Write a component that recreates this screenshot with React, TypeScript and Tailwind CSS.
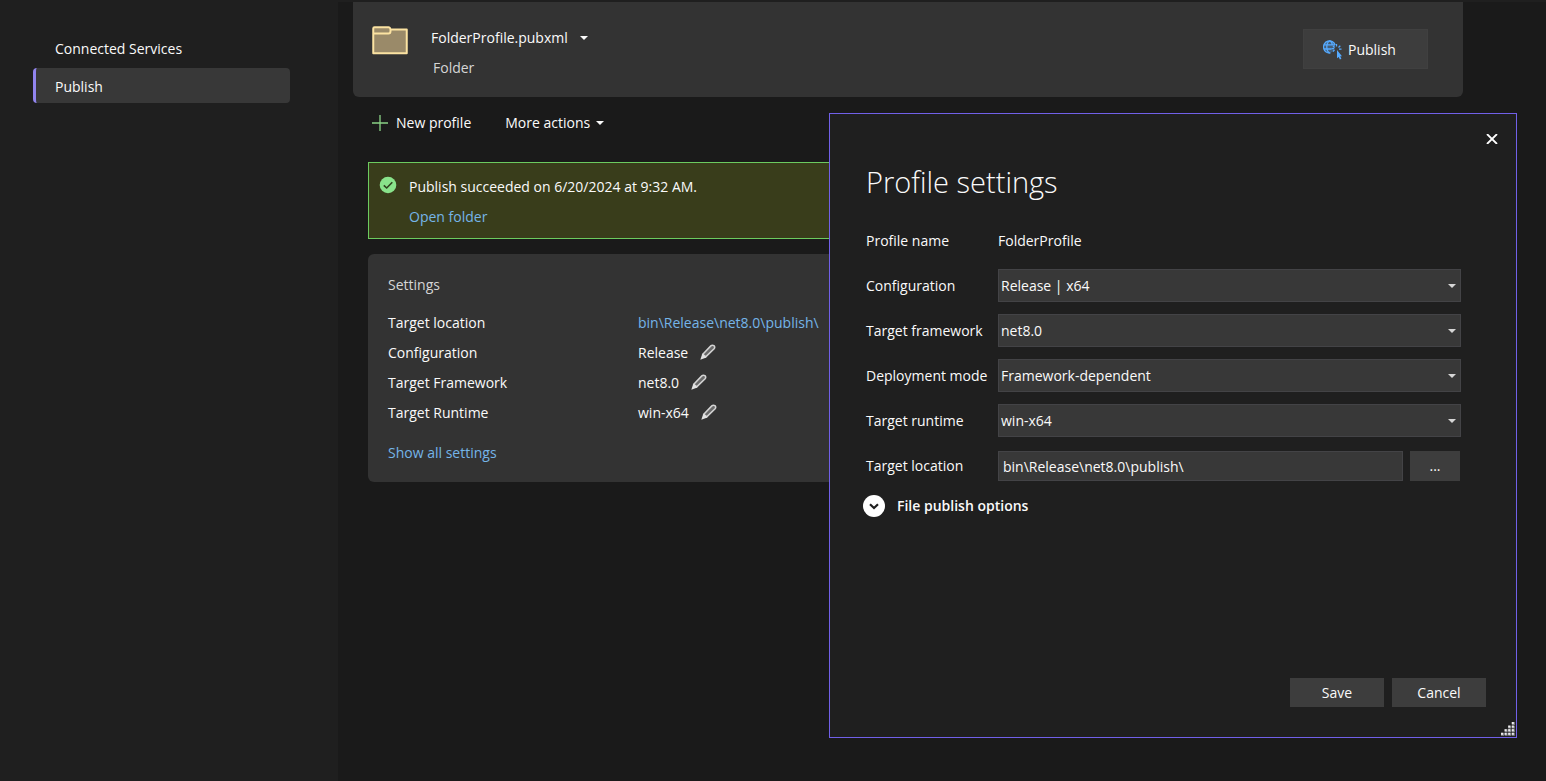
import { useId, type ReactNode } from "react";

function Caret({ className = "" }: { className?: string }) {
  return (
    <svg width="8" height="4" viewBox="0 0 8 4" aria-hidden="true" className={className}>
      <path d="M0 0h8L4 4z" fill="currentColor" />
    </svg>
  );
}

function FolderIcon() {
  return (
    <svg width="36" height="29" viewBox="0 0 36 29" aria-hidden="true" className="shrink-0">
      <path d="M1 2.500Q1 1 2.500 1H16.500L19 4h15.500v23.500H1z" fill="#9a8a69" />
      <path
        d="M1.250 2.500Q1.250 1.250 2.500 1.250H16.500Q18 1.250 18.500 3.500H34.750V27.250H1.250zM1.250 7.500H16.500Q18.500 7.500 18.500 5V3.500"
        fill="none"
        stroke="#fce3a2"
        strokeWidth="2"
        strokeLinejoin="round"
      />
    </svg>
  );
}

function GlobeCursorIcon() {
  return (
    <svg width="20" height="20" viewBox="0 0 20 20" aria-hidden="true" className="shrink-0">
      <circle cx="6.500" cy="7" r="5.800" fill="#55aaff" opacity="0.300" />
      <g fill="none" stroke="#55aaff" strokeWidth="1.300">
        <path d="M12.200 5A6 6 0 1 0 7.500 12.900" />
        <path d="M9.500 5.500Q8.700 1 6.500 1 3.800 2.500 3.800 7t2.700 6M1 4.800h11M.8 9h7.700" />
        <path d="M13.500 6.500V4M11.500 7.500 10 6M15.500 7.500 17.300 5.700M16 9.200h2.500M11.500 10 10 11.500M11 8.700H8.500" />
      </g>
      <path d="M14 10v8.300l1.700-1.400 1.200 2.600 1.500-.7-1.200-2.500H19z" fill="#55aaff" />
    </svg>
  );
}

function CheckIcon() {
  return (
    <svg width="18" height="18" viewBox="0 0 18 18" aria-hidden="true" className="shrink-0">
      <circle cx="9" cy="9" r="8.300" fill="#89e38b" />
      <path d="M4.800 9.300 7.700 12l5.600-5.800" fill="none" stroke="#30421f" strokeWidth="1.600" />
    </svg>
  );
}

function PencilIcon() {
  return (
    <svg width="16" height="16" viewBox="0 0 16 16" aria-hidden="true">
      <path
        d="M2.800 10.200 10.800 1.900Q12.200.6 13.900 1.600 15.400 3 14.100 4.700L5.700 12.900z"
        fill="#6a6a6a"
        stroke="#d4d4d4"
        strokeWidth="1.500"
      />
      <path d="M2.400 9.500.3 15.700 6.400 13.500z" fill="#e2e2e2" />
    </svg>
  );
}

function ResizeGrip() {
  const dots = [0, 1, 2, 3].flatMap((row) =>
    [0, 1, 2, 3].filter((col) => col >= 3 - row).map((col) => ({ row, col })),
  );
  return (
    <svg width="15" height="15" viewBox="0 0 15 15" aria-hidden="true" className="absolute right-px bottom-px">
      {dots.map(({ row, col }) => (
        <g key={`${row}-${col}`}>
          <rect x={col * 3.600 + 1} y={row * 3.600 + 1} width="3" height="3" fill="#85858a" />
          <rect x={col * 3.600 + 1} y={row * 3.600 + 1} width="2" height="2" fill="#ececec" />
        </g>
      ))}
    </svg>
  );
}

function SettingRow({ label, children }: { label: string; children: ReactNode }) {
  return (
    <div className="flex h-[30px] items-center">
      <dt className="w-[250px] shrink-0">{label}</dt>
      <dd className="flex items-center gap-3">{children}</dd>
    </div>
  );
}

function EditableSetting({ label, value }: { label: string; value: string }) {
  return (
    <SettingRow label={label}>
      {value}
      <button type="button" aria-label={`Edit ${label}`} className="pb-[2px]">
        <PencilIcon />
      </button>
    </SettingRow>
  );
}

function SelectField({ label, value }: { label: string; value: string }) {
  const id = useId();
  return (
    <div className="flex h-[33px] items-center">
      <label htmlFor={id} className="w-[132px] shrink-0">
        {label}
      </label>
      <div className="relative h-full flex-1">
        <select
          id={id}
          defaultValue={value}
          className="h-full w-full appearance-none border border-[#434346] bg-[#383838] pr-5 pl-[2px] text-[#fafafa] outline-none"
        >
          <option>{value}</option>
        </select>
        <Caret className="pointer-events-none absolute top-[15px] right-[5px] text-[#d6d6d6]" />
      </div>
    </div>
  );
}

function ProfileDialog() {
  const locationId = useId();
  return (
    <section
      role="dialog"
      aria-labelledby="dialog-title"
      className="absolute top-[113px] right-[29px] flex min-h-[625px] w-[688px] flex-col border border-[#7160e8] bg-[#1f1f1f] text-[#fafafa]"
    >
      <div className="flex justify-end px-4 pt-[17px]">
        <button type="button" aria-label="Close" className="flex h-4 w-4 items-center justify-center">
          <svg width="12" height="10" viewBox="0 0 12 10" aria-hidden="true">
            <path d="M1 0 11 10M11 0 1 10" stroke="#ffffff" strokeWidth="1.800" />
          </svg>
        </button>
      </div>
      <h2 id="dialog-title" className="mt-3 px-9 text-[29px] leading-[46px] font-light">
        Profile settings
      </h2>
      <form id="profile-form" className="mt-[19px] flex flex-col gap-3 pr-[55px] pl-9">
        <div className="flex h-[33px] items-center">
          <span className="w-[132px] shrink-0">Profile name</span>
          <span>FolderProfile</span>
        </div>
        <SelectField label="Configuration" value="Release | x64" />
        <SelectField label="Target framework" value="net8.0" />
        <SelectField label="Deployment mode" value="Framework-dependent" />
        <SelectField label="Target runtime" value="win-x64" />
        <div className="flex h-[33px] items-center">
          <label htmlFor={locationId} className="w-[132px] shrink-0">
            Target location
          </label>
          <div className="flex h-[30px] flex-1 gap-[7px] pr-px">
            <input
              id={locationId}
              type="text"
              defaultValue="bin\Release\net8.0\publish\"
              className="min-w-0 flex-1 border border-[#434346] bg-[#383838] px-1 pt-[2px] outline-none"
            />
            <button type="button" aria-label="Browse" className="w-[50px] bg-[#3d3d3d]">
              ...
            </button>
          </div>
        </div>
      </form>
      <button type="button" className="mt-[13px] flex items-center gap-3 self-start pl-[33px] font-semibold">
        <svg width="22" height="22" viewBox="0 0 22 22" aria-hidden="true">
          <circle cx="11" cy="11" r="11" fill="#ffffff" />
          <path d="m7 9.200 4 3.800 4-3.800" fill="none" stroke="#1f1f1f" strokeWidth="2.200" />
        </svg>
        File publish options
      </button>
      <div className="mt-auto flex justify-end gap-2 pr-[30px] pb-[30px]">
        <button type="submit" form="profile-form" className="h-[29px] w-[94px] bg-[#3d3d3d] pt-px">
          Save
        </button>
        <button type="button" className="h-[29px] w-[94px] bg-[#3d3d3d] pt-px">
          Cancel
        </button>
      </div>
      <ResizeGrip />
    </section>
  );
}

export default function App() {
  return (
    <div className="relative flex min-h-screen bg-[#1f1f1f] pt-[2px] font-['Open_Sans','Noto_Sans',sans-serif] text-[14px] leading-5 text-[#fafafa]">
      <nav className="w-[338px] shrink-0 pt-7 pr-12 pl-[33px]">
        <a href="#services" className="flex h-[35px] items-center pt-[2px] pl-[22px]">
          Connected Services
        </a>
        <a
          href="#publish"
          aria-current="page"
          className="mt-[3px] flex h-[35px] items-center rounded border-l-3 border-[#9184ee] bg-[#383838] pt-[2px] pl-[19px]"
        >
          Publish
        </a>
      </nav>

      <main className="min-w-0 flex-1 bg-[#1a1a1a] pr-[83px] pl-[15px]">
        <header className="flex h-[95px] items-start justify-between rounded-b-md bg-[#333333] pr-[35px] pl-[19px]">
          <div className="flex gap-[23px] pt-6">
            <FolderIcon />
            <div>
              <button type="button" className="flex h-6 items-center gap-3">
                FolderProfile.pubxml
                <Caret />
              </button>
              <p className="mt-2 pl-[2px] text-[#d6d6d6]">Folder</p>
            </div>
          </div>
          <button
            type="button"
            className="mt-[27px] flex h-10 w-[125px] items-center gap-[5px] border border-[#404040] bg-[#3d3d3d] pt-px pl-[19px]"
          >
            <GlobeCursorIcon />
            Publish
          </button>
        </header>

        <div className="flex h-[65px] items-start gap-[34px] pt-4 pl-[19px]">
          <button type="button" className="flex items-center gap-2">
            <svg width="16" height="16" viewBox="0 0 16 16" aria-hidden="true">
              <path d="M8 0v16M0 8h16" stroke="#89d185" strokeWidth="1.300" />
            </svg>
            New profile
          </button>
          <button type="button" className="flex items-center gap-[6px]">
            More actions
            <Caret />
          </button>
        </div>

        <div className="flex flex-col gap-[15px] pl-[15px]">
          <div role="status" className="flex h-[77px] gap-3 border border-[#6ccb5f] bg-[#393d1b] px-[10px] pt-[13px]">
            <CheckIcon />
            <div className="flex flex-col items-start gap-[10px] pt-px">
              <p>Publish succeeded on 6/20/2024 at 9:32 AM.</p>
              <a href="#folder" className="text-[#75b5e8]">
                Open folder
              </a>
            </div>
          </div>

          <section className="rounded-md bg-[#333333] px-5 pt-[21px] pb-[19px]">
            <h2 className="text-[#d6d6d6]">Settings</h2>
            <dl className="mt-[13px]">
              <SettingRow label="Target location">
                <a href="#location" className="text-[#75b5e8]">
                  bin\Release\net8.0\publish\
                </a>
              </SettingRow>
              <EditableSetting label="Configuration" value="Release" />
              <EditableSetting label="Target Framework" value="net8.0" />
              <EditableSetting label="Target Runtime" value="win-x64" />
            </dl>
            <a href="#all-settings" className="mt-[15px] inline-block text-[#75b5e8]">
              Show all settings
            </a>
          </section>
        </div>
      </main>

      <ProfileDialog />
    </div>
  );
}
